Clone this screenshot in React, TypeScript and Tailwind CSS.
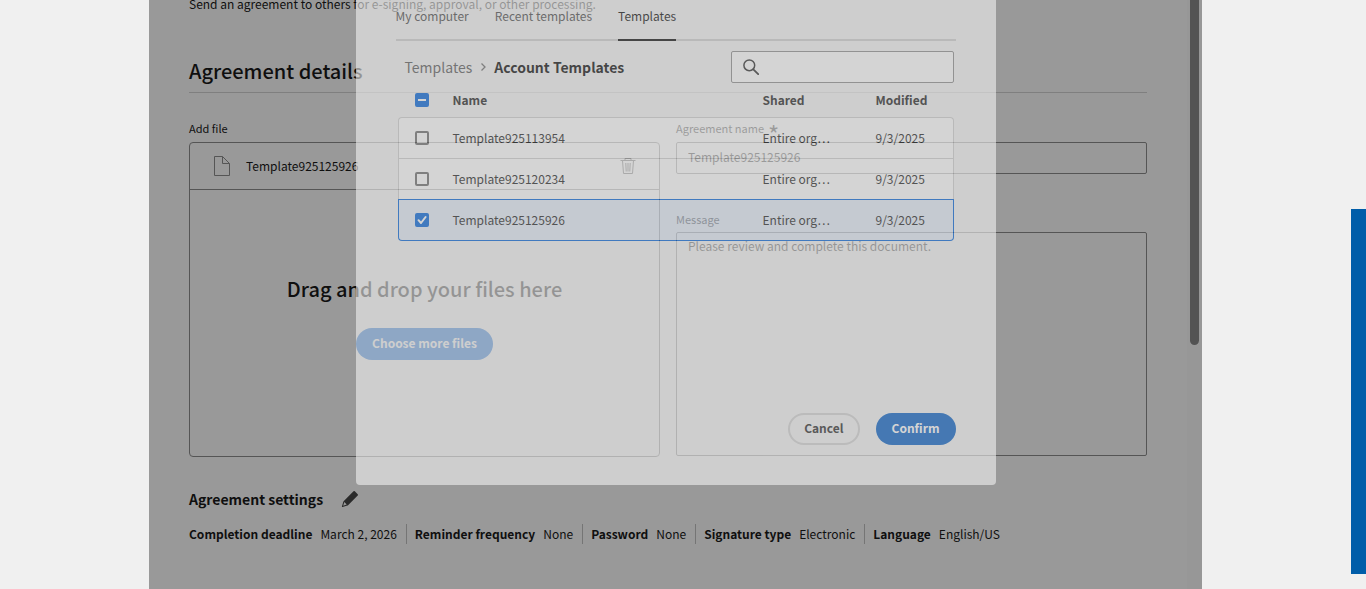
import { useState } from 'react';

const settings = [
  { label: 'Completion deadline', value: 'March 2, 2026' },
  { label: 'Reminder frequency', value: 'None' },
  { label: 'Password', value: 'None' },
  { label: 'Signature type', value: 'Electronic' },
  { label: 'Language', value: 'English/US' },
];

const tabs = ['My computer', 'Recent templates', 'Templates'];

const templates = [
  { name: 'Template925113954', shared: 'Entire org…', modified: '9/3/2025' },
  { name: 'Template925120234', shared: 'Entire org…', modified: '9/3/2025' },
  { name: 'Template925125926', shared: 'Entire org…', modified: '9/3/2025' },
];

type CheckboxProps = {
  label: string;
  checked: boolean;
  mixed?: boolean;
  onChange: () => void;
};

function Checkbox({ label, checked, mixed = false, onChange }: CheckboxProps) {
  return (
    <span className="relative block h-3.5 w-3.5">
      <input
        type="checkbox"
        aria-label={label}
        checked={checked}
        onChange={onChange}
        className="block h-3.5 w-3.5 appearance-none rounded-xs border-2 border-[#6e6e6e] bg-white checked:border-[#0265dc] checked:bg-[#0265dc]"
      />
      {checked && (
        <svg
          viewBox="0 0 14 14"
          className="pointer-events-none absolute inset-0 h-3.5 w-3.5"
          fill="none"
          stroke="#fff"
          strokeWidth="2"
          strokeLinecap={mixed ? 'butt' : 'round'}
          strokeLinejoin="round"
        >
          <path d={mixed ? 'M3 7h8' : 'M3.5 7.2l2.5 2.8 4.6-6'} />
        </svg>
      )}
    </span>
  );
}

function FileIcon() {
  return (
    <svg viewBox="0 0 16 20" className="h-5 w-4" fill="none" stroke="#8e8e8e">
      <path d="M.5.5h8l7 7v12H.5zM8.5.5v7h7" />
    </svg>
  );
}

function TrashIcon() {
  return (
    <svg viewBox="0 0 16 18" className="h-[18px] w-4" fill="none" stroke="#5a5a5a">
      <path d="M.5 3.5h15M5 3V1.5h6V3M2.5 3.5l1 13h9l1-13M5.8 6l.4 8.5M8 6v8.5M10.2 6l-.4 8.5" />
    </svg>
  );
}

function PencilIcon() {
  return (
    <svg viewBox="0 0 18 18" className="h-[18px] w-[18px]" fill="#464646">
      <path d="M16.7 4.2 13.8 1.3a.9.9 0 0 0-1.3 0L2.6 11.2a1 1 0 0 0-.2.4L.9 16.5c-.1.4.3.7.6.6l4.9-1.5.4-.2 9.9-9.9a.9.9 0 0 0 0-1.3zM5.7 14.5l-3.5 1.2 1.1-3.6z" />
    </svg>
  );
}

function SearchIcon() {
  return (
    <svg viewBox="0 0 16 16" className="h-4 w-4" fill="none" stroke="#2c2c2c" strokeWidth="1.5">
      <circle cx="6.3" cy="6.3" r="5.4" />
      <path d="M10.3 10.3l4.9 4.9" strokeLinecap="round" strokeWidth="1.8" />
    </svg>
  );
}

function AgreementForm() {
  const [name, setName] = useState('Template925125926');
  const [message, setMessage] = useState('');

  return (
    <main className="min-w-0 flex-1 pr-10 pl-10">
      <p className="-mt-[5px] leading-[18px]">
        Send an agreement to others for e-signing, approval, or other processing.
      </p>
      <h1 className="mt-[42px] border-b border-[#d4d4d4] pb-[5px] text-xl leading-8 font-medium">
        Agreement details
      </h1>

      <div className="mt-[27px] grid grid-cols-2 gap-4">
        <section>
          <h2 className="text-[11px] leading-4">Add file</h2>
          <div className="mt-1.5 h-[315px] rounded border border-[#8e8e8e]">
            <div className="flex h-[47px] items-center border-b border-[#8e8e8e] pr-[23px] pl-6">
              <FileIcon />
              <span className="ml-4 flex-1">Template925125926</span>
              <button type="button" aria-label="Delete file">
                <TrashIcon />
              </button>
            </div>
            <div className="flex flex-col items-center pt-[83px]">
              <p className="text-xl leading-8 font-medium">
                Drag and drop your files here
              </p>
              <button
                type="button"
                className="mt-[23px] h-8 rounded-full bg-[#0265dc] px-4 pb-0.5 leading-4 font-bold text-white"
              >
                Choose more files
              </button>
            </div>
          </div>
        </section>

        <section>
          <label
            htmlFor="agreement-name"
            className="flex h-4 items-center gap-1 text-[11px] leading-4"
          >
            Agreement name
            <span className="pt-3 text-2xl leading-4">*</span>
          </label>
          <input
            id="agreement-name"
            type="text"
            value={name}
            onChange={(e) => setName(e.target.value)}
            className="mt-1.5 block h-8 w-full rounded-xs border border-[#8e8e8e] px-[11px] pb-1 leading-[18px]"
          />
          <label
            htmlFor="agreement-message"
            className="mt-[37px] block text-[11px] leading-4"
          >
            Message
          </label>
          <textarea
            id="agreement-message"
            value={message}
            onChange={(e) => setMessage(e.target.value)}
            placeholder="Please review and complete this document."
            className="mt-[5px] block h-56 w-full resize-none rounded-xs border border-[#8e8e8e] px-[11px] py-1 leading-[18px] placeholder:text-[#1a1a1a]"
          />
        </section>
      </div>

      <div className="mt-8 flex items-center gap-[18px]">
        <h2 className="text-sm leading-5 font-bold">Agreement settings</h2>
        <button type="button" aria-label="Edit agreement settings">
          <PencilIcon />
        </button>
      </div>
      <dl className="mt-[15px] flex">
        {settings.map(({ label, value }) => (
          <div
            key={label}
            className="flex gap-2 border-r border-[#c4c4c4] pr-[9px] pl-2 leading-5 whitespace-nowrap first:pl-0 last:border-r-0"
          >
            <dt className="font-bold">{label}</dt>
            <dd>{value}</dd>
          </div>
        ))}
      </dl>
    </main>
  );
}

function TemplatePicker() {
  const [activeTab, setActiveTab] = useState('Templates');
  const [selected, setSelected] = useState(['Template925125926']);

  const toggle = (name: string) =>
    setSelected((prev) =>
      prev.includes(name) ? prev.filter((n) => n !== name) : [...prev, name],
    );

  return (
    <div
      role="dialog"
      aria-label="Add files"
      className="w-full max-w-[640px] rounded-b bg-[#f5f5f5] px-10 pb-10 text-[#0a0a0a] opacity-58"
    >
      <div role="tablist" className="flex gap-[26px] border-b-2 border-[#d0d0d0]">
        {tabs.map((tab) => (
          <button
            key={tab}
            type="button"
            role="tab"
            aria-selected={tab === activeTab}
            onClick={() => setActiveTab(tab)}
            className="-mb-0.5 h-[41px] border-b-2 border-transparent pt-[7px] pb-[14px] leading-[18px] text-[#4b4b4b] aria-selected:border-[#0a0a0a] aria-selected:text-[#0a0a0a]"
          >
            {tab}
          </button>
        ))}
      </div>

      <div className="mt-2.5 flex items-center justify-between pr-0.5 pl-[9px] text-sm">
        <nav aria-label="Breadcrumb" className="flex items-center">
          <a href="#templates" className="text-[#5a5a5a]">
            Templates
          </a>
          <svg viewBox="0 0 6 8" className="mx-2 h-2 w-1.5" fill="none" stroke="#6e6e6e" strokeWidth="1.3">
            <path d="M1.5.5L5 4 1.5 7.5" />
          </svg>
          <span className="font-bold">Account Templates</span>
        </nav>
        <label className="flex h-8 w-[223px] items-center rounded-xs border border-[#8e8e8e] bg-white px-[11px]">
          <SearchIcon />
          <input
            type="search"
            aria-label="Search templates"
            className="ml-2 min-w-0 flex-1 outline-none"
          />
        </label>
      </div>

      <div className="pr-0.5 pl-0.5">
        <table className="w-full table-fixed border-separate border-spacing-0 text-left text-[#222]">
          <colgroup>
            <col className="w-[55px]" />
            <col />
            <col className="w-[113px]" />
            <col className="w-[78px]" />
          </colgroup>
          <thead>
            <tr className="h-[34px]">
              <th className="pl-[17px]">
                <Checkbox
                  label="Select all"
                  checked={selected.length > 0}
                  mixed={selected.length < templates.length}
                  onChange={() => setSelected([])}
                />
              </th>
              <th>Name</th>
              <th>Shared</th>
              <th>Modified</th>
            </tr>
          </thead>
          <tbody className="[&_td]:border-t [&_td]:border-[#d0d0d0] [&_td:first-child]:border-l [&_td:last-child]:border-r [&_tr:first-child_td:first-child]:rounded-tl [&_tr:first-child_td:last-child]:rounded-tr [&_tr:last-child_td]:border-b [&_tr:last-child_td:first-child]:rounded-bl [&_tr:last-child_td:last-child]:rounded-br [&_tr[aria-selected=true]_td]:border-[#0265dc] [&_tr[aria-selected=true]_td]:bg-[#e6eefa]">
            {templates.map(({ name, shared, modified }) => (
              <tr
                key={name}
                aria-selected={selected.includes(name)}
                className="h-[41px] last:h-[42px]"
              >
                <td className="bg-white pl-4">
                  <Checkbox
                    label={name}
                    checked={selected.includes(name)}
                    onChange={() => toggle(name)}
                  />
                </td>
                <td className="bg-white">{name}</td>
                <td className="bg-white">{shared}</td>
                <td className="bg-white">{modified}</td>
              </tr>
            ))}
          </tbody>
        </table>
      </div>

      <div className="mt-[172px] flex justify-end gap-4 leading-4 font-bold">
        <button
          type="button"
          className="h-8 rounded-full border-2 border-[#d4d4d4] px-3.5 pb-0.5 text-[#2c2c2c]"
        >
          Cancel
        </button>
        <button
          type="button"
          className="h-8 rounded-full bg-[#0a62c6] px-4 pb-0.5 text-white"
        >
          Confirm
        </button>
      </div>
    </div>
  );
}

export default function App() {
  return (
    <div className="flex h-screen bg-[#f0f0f0] font-['Noto_Sans_CJK_SC',sans-serif] text-xs text-[#1a1a1a]">
      <div className="flex min-w-0 flex-1 justify-center">
        <div className="relative flex w-full max-w-[1053px] overflow-hidden bg-white">
          <AgreementForm />
          <div className="flex w-[15px] justify-center bg-[#fcfcfc]">
            <div className="h-[345px] w-[9px] rounded-b-full bg-[#8b8b8b]" />
          </div>
          <div className="absolute inset-0 flex items-start justify-center bg-black/40">
            <TemplatePicker />
          </div>
        </div>
      </div>
      <div className="mb-[15px] h-[365px] w-[15px] self-end bg-[#005da9]" />
    </div>
  );
}
